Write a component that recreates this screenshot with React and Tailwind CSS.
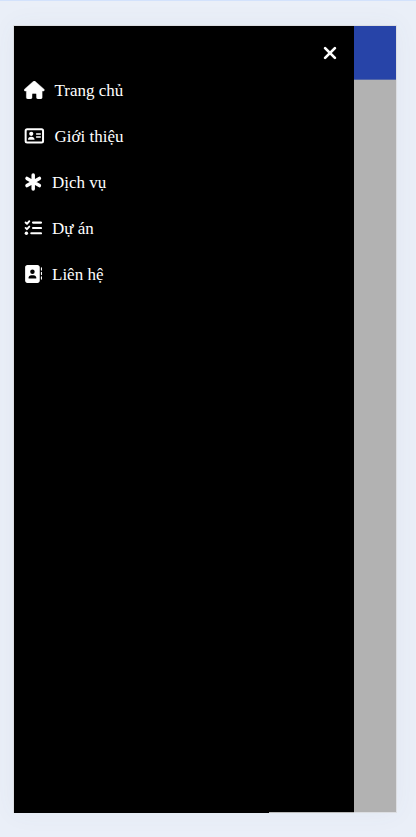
import { FaHouse, FaAddressBook } from "react-icons/fa6";

function HomeIcon() {
  return <FaHouse className="h-[18px] w-[20.5px] shrink-0" stroke="currentColor" strokeWidth="12" />;
}

function CardIcon() {
  return (
    <svg viewBox="0 0 20 18" className="h-[18px] w-[20.5px] shrink-0" fill="currentColor">
      <rect x="1.4" y="2.3" width="17.4" height="13.2" rx="1.5" fill="none" stroke="currentColor" strokeWidth="2" />
      <circle cx="7" cy="6.8" r="2.1" />
      <path d="M3.7 12.8c0-2 1.3-3.1 3.3-3.1s3.3 1.1 3.3 3.1z" />
      <path d="M12.4 7h3.6M12.4 10h3.6" stroke="currentColor" strokeWidth="1.6" strokeLinecap="round" />
    </svg>
  );
}

function AsteriskIcon() {
  return (
    <svg viewBox="0 0 18 18" className="h-[18px] w-[18px] shrink-0" fill="none" stroke="currentColor" strokeWidth="3.5" strokeLinecap="round">
      <path d="M9.2 2.1v13.8M3 5.4l12.4 7.2M15.4 5.4 3 12.6" />
    </svg>
  );
}

function ListIcon() {
  return (
    <svg viewBox="0 0 18 18" className="h-[18px] w-[18px] shrink-0" fill="none" stroke="currentColor" strokeWidth="2.1" strokeLinecap="round" strokeLinejoin="round">
      <path d="M9 3.6h8M9 9h8M7.3 14.3H17" />
      <path d="m1.6 3.5 1.4 1.3 2.3-2.6M1.6 8.9 3 10.2l2.3-2.6" strokeWidth="1.9" />
      <circle cx="2.4" cy="14.3" r="1.7" fill="currentColor" stroke="none" />
    </svg>
  );
}

function BookIcon() {
  return <FaAddressBook className="h-[18px] w-[18px] shrink-0" />;
}

function CloseIcon() {
  return (
    <svg viewBox="0 0 18 18" className="h-[18px] w-[18px]" fill="none" stroke="currentColor" strokeWidth="2.7" strokeLinecap="round">
      <path d="m4.1 4.1 9.8 9.8M13.9 4.1l-9.8 9.8" />
    </svg>
  );
}

const items = [
  { label: "Trang chủ", Icon: HomeIcon },
  { label: "Giới thiệu", Icon: CardIcon },
  { label: "Dịch vụ", Icon: AsteriskIcon },
  { label: "Dự án", Icon: ListIcon },
  { label: "Liên hệ", Icon: BookIcon },
];

export default function App() {
  return (
    <div className="h-[837px] w-[416px] overflow-hidden border-t border-[#d3e2fc] bg-[#eaeff8] pl-[13px] pt-[24px]">
      <div className="flex h-[788px] w-[384px] border border-[#dcdee2] bg-[#b2b2b2] shadow-[0_0_24px_rgba(70,90,120,0.05)]">
        <nav className="flex h-[787px] w-[340px] shrink-0 flex-col bg-black font-['Liberation_Serif',serif] text-[17px] text-white">
          <div className="flex h-[41px] justify-end pr-[15px] pt-[18px]">
            <CloseIcon />
          </div>
          <ul>
            {items.map(({ label, Icon }) => (
              <li key={label} className="flex h-[46px] items-center gap-[10px] pl-[10px]">
                <Icon />
                <span className="whitespace-nowrap pt-[2px]">{label}</span>
              </li>
            ))}
          </ul>
          <div className="mt-auto ml-[255px] h-px bg-[#b8b8b8]" />
        </nav>
        <div className="h-[54px] grow border-b border-[#5468a9] bg-[#2744a8]" />
      </div>
    </div>
  );
}
